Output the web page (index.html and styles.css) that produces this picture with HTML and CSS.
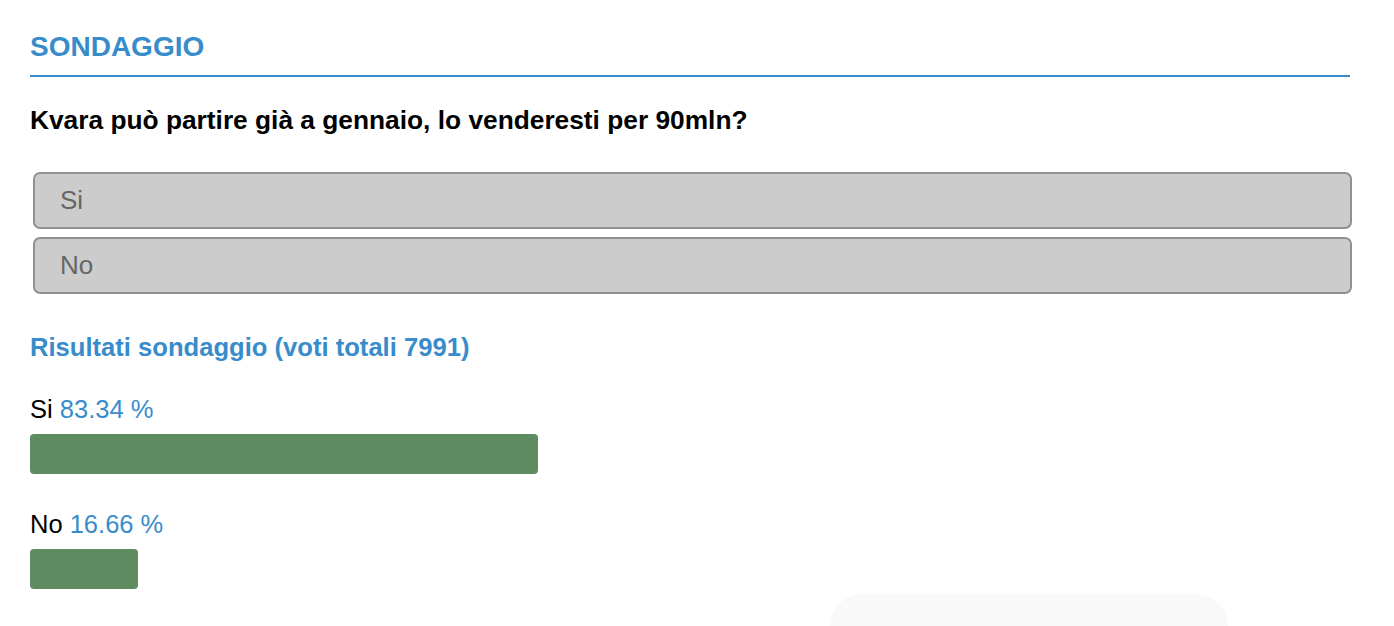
FILE: index.html
```html
<!DOCTYPE html>
<html lang="it">
<head>
<meta charset="utf-8">
<title>Sondaggio</title>
<link rel="stylesheet" href="styles.css">
</head>
<body>
<div class="poll">
  <h2 class="poll-title">SONDAGGIO</h2>
  <p class="poll-question">Kvara può partire già a gennaio, lo venderesti per 90mln?</p>
  <div class="poll-options">
    <button class="poll-option">Si</button>
    <button class="poll-option">No</button>
  </div>
  <h3 class="poll-results-title">Risultati sondaggio (voti totali 7991)</h3>
  <div class="poll-results">
    <div class="result">
      <div class="result-label">Si <span class="result-pct">83.34 %</span></div>
      <div class="result-bar" style="width: 508px"></div>
    </div>
    <div class="result">
      <div class="result-label">No <span class="result-pct">16.66 %</span></div>
      <div class="result-bar" style="width: 108px"></div>
    </div>
  </div>
</div>
<div class="floating-card"></div>
</body>
</html>
```

FILE: styles.css
```css
html, body {
  margin: 0;
  padding: 0;
  background: #ffffff;
}
body {
  font-family: "Liberation Sans", Arial, Helvetica, sans-serif;
  color: #000;
  overflow: hidden;
  height: 626px;
  position: relative;
}
.poll {
  padding: 30px 44px 0 30px;
  display: flex;
  flex-direction: column;
}
.poll-title {
  margin: 0;
  font-size: 28px;
  line-height: 34px;
  font-weight: bold;
  color: #398ccb;
  padding-bottom: 11px;
  border-bottom: 2px solid #398ccb;
}
.poll-question {
  margin: 28px 0 0 0;
  font-size: 26.3px;
  line-height: 30px;
  font-weight: bold;
}
.poll-options {
  margin: 37px -2px 0 3px;
  display: flex;
  flex-direction: column;
  gap: 8px;
}
.poll-option {
  height: 57px;
  box-sizing: border-box;
  background: #cccccc;
  border: 2px solid #919191;
  border-radius: 7px;
  padding: 0 0 0 25px;
  font-family: "Liberation Sans", Arial, Helvetica, sans-serif;
  font-size: 26px;
  color: #666666;
  text-align: left;
  display: flex;
  align-items: center;
}
.poll-results-title {
  margin: 38px 0 0 0;
  font-size: 25.6px;
  line-height: 30px;
  font-weight: bold;
  color: #398ccb;
}
.poll-results {
  margin-top: 32px;
  display: flex;
  flex-direction: column;
  gap: 35px;
}
.result {
  display: flex;
  flex-direction: column;
  gap: 10px;
}
.result-label {
  font-size: 25.5px;
  line-height: 30px;
}
.result-pct {
  color: #398ccb;
}
.result-bar {
  height: 40px;
  background: #5e8b60;
  border-radius: 4px;
}
.floating-card {
  position: absolute;
  left: 830px;
  top: 594px;
  width: 398px;
  height: 32px;
  background: #f9f9f9;
  border-radius: 32px 32px 0 0;
}
```
